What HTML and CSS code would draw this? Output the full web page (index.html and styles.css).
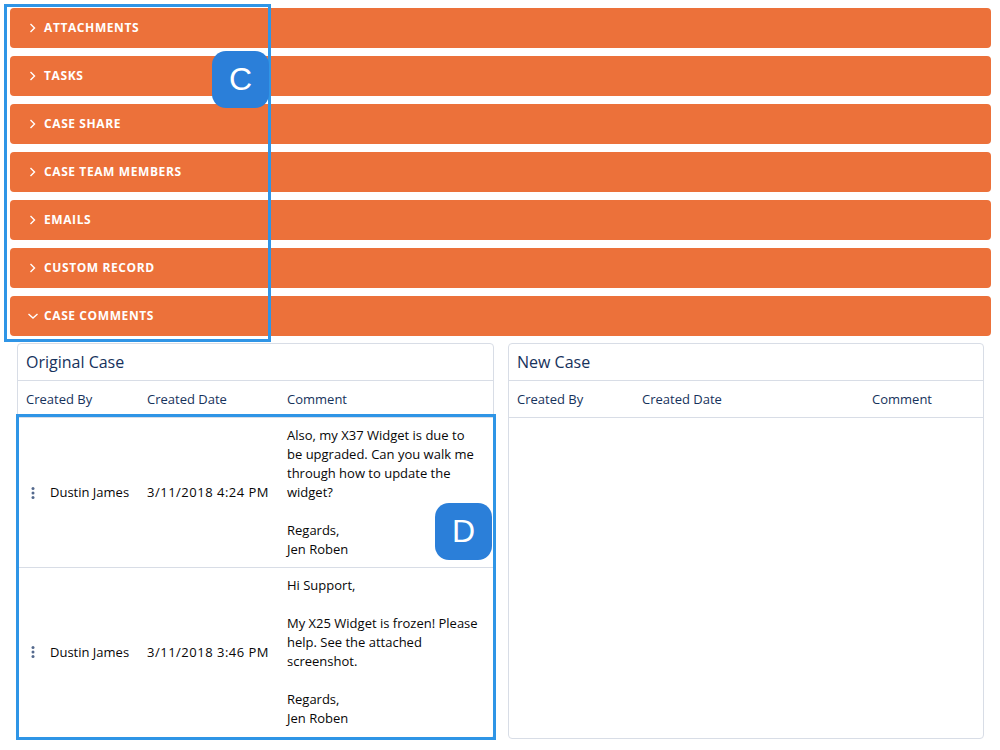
FILE: index.html
```html
<!DOCTYPE html>
<html>
<head>
<meta charset="utf-8">
<link rel="stylesheet" href="styles.css">
</head>
<body>
<div class="page">
  <div class="bars">
    <div class="bar"><svg class="chev" viewBox="0 0 12 12"><path d="M3.5 2 L7.5 6 L3.5 10"/></svg><span>Attachments</span></div>
    <div class="bar"><svg class="chev" viewBox="0 0 12 12"><path d="M3.5 2 L7.5 6 L3.5 10"/></svg><span>Tasks</span></div>
    <div class="bar"><svg class="chev" viewBox="0 0 12 12"><path d="M3.5 2 L7.5 6 L3.5 10"/></svg><span>Case Share</span></div>
    <div class="bar"><svg class="chev" viewBox="0 0 12 12"><path d="M3.5 2 L7.5 6 L3.5 10"/></svg><span>Case Team Members</span></div>
    <div class="bar"><svg class="chev" viewBox="0 0 12 12"><path d="M3.5 2 L7.5 6 L3.5 10"/></svg><span>Emails</span></div>
    <div class="bar"><svg class="chev" viewBox="0 0 12 12"><path d="M3.5 2 L7.5 6 L3.5 10"/></svg><span>Custom Record</span></div>
    <div class="bar"><svg class="chev" viewBox="0 0 12 12"><path d="M1.5 4 L6 8 L10.5 4"/></svg><span>Case Comments</span></div>
  </div>

  <div class="cards">
    <div class="card">
      <div class="card-title">Original Case</div>
      <div class="grid orig head">
        <div class="cell">Created By</div>
        <div class="cell">Created Date</div>
        <div class="cell">Comment</div>
      </div>
      <div class="grid orig row">
        <div class="cell mid"><svg class="kebab" viewBox="0 0 14 14"><circle cx="7" cy="2.5" r="1.5"/><circle cx="7" cy="7" r="1.5"/><circle cx="7" cy="11.5" r="1.5"/></svg>Dustin James</div>
        <div class="cell mid date">3/11/2018 4:24 PM</div>
        <div class="cell comment">Also, my X37 Widget is due to
be upgraded. Can you walk me
through how to update the
widget?

Regards,
Jen Roben</div>
      </div>
      <div class="grid orig row last">
        <div class="cell mid"><svg class="kebab" viewBox="0 0 14 14"><circle cx="7" cy="2.5" r="1.5"/><circle cx="7" cy="7" r="1.5"/><circle cx="7" cy="11.5" r="1.5"/></svg>Dustin James</div>
        <div class="cell mid date">3/11/2018 3:46 PM</div>
        <div class="cell comment">Hi Support,

My X25 Widget is frozen! Please
help. See the attached
screenshot.

Regards,
Jen Roben</div>
      </div>
    </div>

    <div class="card">
      <div class="card-title">New Case</div>
      <div class="grid newc head">
        <div class="cell">Created By</div>
        <div class="cell">Created Date</div>
        <div class="cell">Comment</div>
      </div>
    </div>
  </div>

  <div class="anno anno-c"></div>
  <div class="badge badge-c">C</div>
  <div class="anno anno-d"></div>
  <div class="badge badge-d">D</div>
</div>
</body>
</html>
```

FILE: styles.css
```css
* { box-sizing: border-box; }
html, body { margin: 0; padding: 0; background: #fff; }
body {
  font-family: "Open Sans", "Liberation Sans", sans-serif;
  color: #16325c;
  width: 1000px;
  height: 750px;
  overflow: hidden;
}
.page { position: relative; padding-top: 8px; }

.bars {
  display: flex;
  flex-direction: column;
  gap: 8px;
  padding: 0 9px 0 10px;
}
.bar {
  height: 40px;
  background: #ec713a;
  border-radius: 4px;
  display: flex;
  align-items: center;
  padding-left: 17px;
  color: #fff;
  font-size: 12px;
  font-weight: 700;
  letter-spacing: 0.6px;
  text-transform: uppercase;
}
.bar span { margin-top: -1px; }
.chev {
  width: 12px;
  height: 12px;
  margin-right: 5px;
  fill: none;
  stroke: #fff;
  stroke-width: 1.4;
}

.cards {
  display: grid;
  grid-template-columns: 477px 476px;
  gap: 14px;
  padding: 7px 0 0 17px;
}
.card {
  border: 1px solid #d8dde6;
  border-radius: 4px;
  height: 396px;
  background: #fff;
  overflow: hidden;
}
.card-title {
  height: 37px;
  display: flex;
  align-items: center;
  padding-left: 8px;
  font-size: 16px;
  border-bottom: 1px solid #d8dde6;
}
.grid { display: grid; }
.orig { grid-template-columns: 121px 140px 1fr; }
.newc { grid-template-columns: 125px 230px 1fr; }
.head {
  height: 37px;
  align-items: center;
  font-size: 13px;
  border-bottom: 1px solid #d8dde6;
}
.head .cell { padding-left: 8px; }
.row {
  font-size: 13px;
  color: #080707;
  border-bottom: 1px solid #d8dde6;
}
.row.last { border-bottom: none; }
.row .cell { padding: 8px 0 8px 8px; line-height: 19px; }
.cell.mid {
  display: flex;
  align-items: center;
}
.date { letter-spacing: 0.5px; }
.comment { white-space: pre-line; }
.kebab {
  width: 14px;
  height: 14px;
  fill: #54698d;
  margin-right: 10px;
}

.anno {
  position: absolute;
  border: 3px solid #2f95e6;
}
.anno-c { left: 4px; top: 4px; width: 267px; height: 338px; }
.anno-d { left: 16px; top: 414px; width: 480px; height: 326px; }
.badge {
  position: absolute;
  width: 57px;
  height: 57px;
  border-radius: 14px;
  background: #2b7fd9;
  color: #fff;
  font-family: "Liberation Sans", Arial, sans-serif;
  font-size: 32px;
  display: flex;
  align-items: center;
  justify-content: center;
}
.badge-c { left: 212px; top: 51px; }
.badge-d { left: 435px; top: 503px; }
```
